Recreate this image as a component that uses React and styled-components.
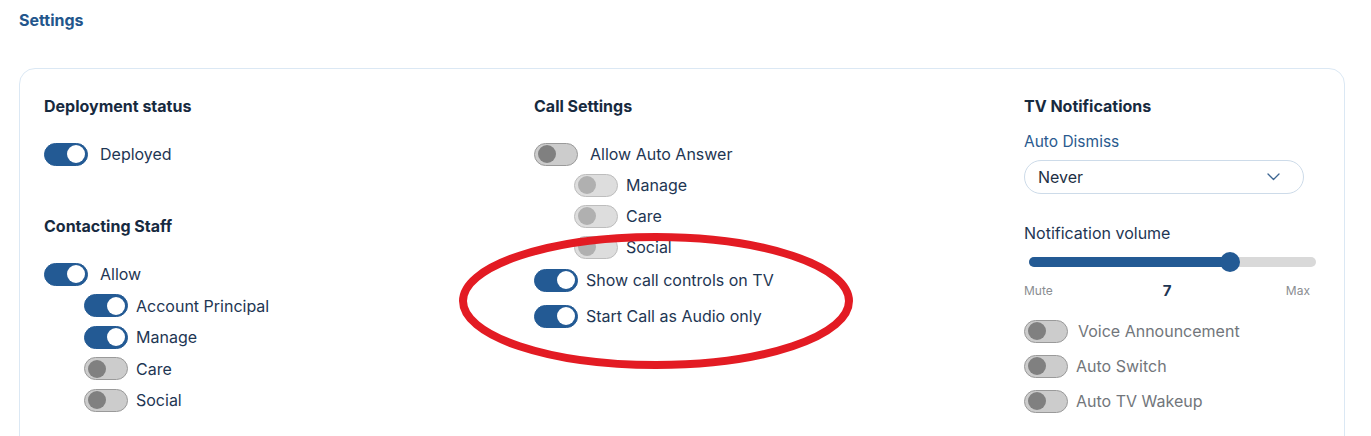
import styled, { createGlobalStyle } from "styled-components";

const GlobalStyle = createGlobalStyle`
  html, body {
    margin: 0;
    padding: 0;
    background: #ffffff;
  }
  body {
    font-family: Inter, "Noto Sans", sans-serif;
    color: #1e3653;
  }
`;

const contactItems = [
  { label: "Account Principal", on: true },
  { label: "Manage", on: true },
  { label: "Care", on: false },
  { label: "Social", on: false },
];

const autoAnswerItems = ["Manage", "Care", "Social"];

const App = () => {
  const volume = 7;

  return (
    <Page>
      <GlobalStyle />
      <PageTitle>Settings</PageTitle>

      <Card>
        <Column>
          <Heading>Deployment status</Heading>
          <ToggleRow $top={26}>
            <Toggle $state="on" />
            <Label $gap={12}>Deployed</Label>
          </ToggleRow>

          <Heading $top={50}>Contacting Staff</Heading>
          <Group $top={26} $gap={7.5}>
            <ToggleRow>
              <Toggle $state="on" />
              <Label $gap={12}>Allow</Label>
            </ToggleRow>
            {contactItems.map((item) => (
              <ToggleRow key={item.label} $indent>
                <Toggle $state={item.on ? "on" : "off"} />
                <Label $gap={8}>{item.label}</Label>
              </ToggleRow>
            ))}
          </Group>
        </Column>

        <Column>
          <Heading>Call Settings</Heading>
          <Group $top={26} $gap={7}>
            <ToggleRow>
              <Toggle $state="off" />
              <Label $gap={12}>Allow Auto Answer</Label>
            </ToggleRow>
            {autoAnswerItems.map((label) => (
              <ToggleRow key={label} $indent>
                <Toggle $state="disabled" />
                <Label $gap={8}>{label}</Label>
              </ToggleRow>
            ))}
          </Group>
          <ToggleRow $top={9}>
            <Toggle $state="on" />
            <Label $gap={8}>Show call controls on TV</Label>
          </ToggleRow>
          <ToggleRow $top={12}>
            <Toggle $state="on" />
            <Label $gap={8}>Start Call as Audio only</Label>
          </ToggleRow>
        </Column>

        <Column>
          <Heading>TV Notifications</Heading>
          <FieldLabel>Auto Dismiss</FieldLabel>
          <Select>
            <span>Never</span>
            <svg width="13" height="8" viewBox="0 0 13 8" fill="none">
              <path
                d="M1 1l5.5 5.5L12 1"
                stroke="#3d6591"
                strokeWidth="1.3"
                strokeLinecap="round"
                strokeLinejoin="round"
              />
            </svg>
          </Select>

          <VolumeLabel>Notification volume</VolumeLabel>
          <Slider>
            <SliderFill style={{ width: `${volume * 10}%` }} />
            <SliderThumb style={{ left: `${volume * 10}%` }} />
          </Slider>
          <SliderScale>
            <span>Mute</span>
            <strong>{volume}</strong>
            <span>Max</span>
          </SliderScale>

          <Group $top={19} $gap={11}>
            <ToggleRow>
              <Toggle $state="off" />
              <Label $gap={10} $muted>
                Voice Announcement
              </Label>
            </ToggleRow>
            <ToggleRow>
              <Toggle $state="off" />
              <Label $gap={8} $muted>
                Auto Switch
              </Label>
            </ToggleRow>
            <ToggleRow>
              <Toggle $state="off" />
              <Label $gap={8} $muted>
                Auto TV Wakeup
              </Label>
            </ToggleRow>
          </Group>
        </Column>
      </Card>

      {/* red annotation ring drawn over the screenshot */}
      <Annotation width="404" height="146" viewBox="0 0 404 146">
        <ellipse
          cx="201"
          cy="72"
          rx="193"
          ry="64"
          fill="none"
          stroke="#e31b23"
          strokeWidth="8"
        />
      </Annotation>
    </Page>
  );
};

export default App;

const Page = styled.div`
  position: relative;
  padding: 10px 26px 0 19px;
  height: 426px;
  overflow: hidden;
`;

const PageTitle = styled.div`
  font-size: 16px;
  font-weight: 700;
  line-height: 20px;
  color: #23568c;
`;

const Card = styled.div`
  margin-top: 38px;
  border: 1px solid #dbe8f4;
  border-radius: 16px;
  padding: 27px 24px 40px 24px;
  display: grid;
  grid-template-columns: 490px 490px 292px;
  min-height: 400px;
`;

const Column = styled.div`
  display: flex;
  flex-direction: column;
  align-items: flex-start;
`;

const Heading = styled.div`
  font-size: 16px;
  font-weight: 700;
  line-height: 20px;
  color: #172a3f;
  margin-top: ${(p) => p.$top || 0}px;
`;

const Group = styled.div`
  display: flex;
  flex-direction: column;
  gap: ${(p) => p.$gap}px;
  margin-top: ${(p) => p.$top || 0}px;
`;

const ToggleRow = styled.div`
  display: flex;
  align-items: center;
  height: 24px;
  margin-top: ${(p) => p.$top || 0}px;
  padding-left: ${(p) => (p.$indent ? 40 : 0)}px;
`;

const toggleColors = {
  on: { track: "#235a94", border: "#235a94", knob: "#ffffff" },
  off: { track: "#cccccc", border: "#9a9a9a", knob: "#808080" },
  disabled: { track: "#dddddd", border: "#bdbdbd", knob: "#b0b0b0" },
};

const Toggle = styled.span`
  position: relative;
  flex: none;
  box-sizing: border-box;
  width: 44px;
  height: 23px;
  border-radius: 12px;
  background: ${(p) => toggleColors[p.$state].track};
  border: 1px solid ${(p) => toggleColors[p.$state].border};

  &::after {
    content: "";
    position: absolute;
    top: 1.5px;
    left: ${(p) => (p.$state === "on" ? "22px" : "3px")};
    width: 18px;
    height: 18px;
    border-radius: 50%;
    background: ${(p) => toggleColors[p.$state].knob};
  }
`;

const Label = styled.span`
  margin-left: ${(p) => p.$gap}px;
  font-size: 16px;
  line-height: 20px;
  color: ${(p) => (p.$muted ? "#72767b" : "#1e3653")};
  white-space: nowrap;
`;

const FieldLabel = styled.div`
  margin-top: 16px;
  font-size: 15.5px;
  line-height: 20px;
  color: #2a5a8e;
`;

const Select = styled.div`
  box-sizing: border-box;
  margin-top: 8px;
  width: 280px;
  height: 34px;
  border: 1px solid #cddbe9;
  border-radius: 17px;
  padding: 0 23px 0 13px;
  display: flex;
  align-items: center;
  justify-content: space-between;
  font-size: 16px;
  color: #1d2f44;
`;

const VolumeLabel = styled.div`
  margin-top: 29px;
  font-size: 16px;
  line-height: 20px;
  color: #1e3653;
`;

const Slider = styled.div`
  position: relative;
  box-sizing: border-box;
  margin: 14px 0 5px 5px;
  width: 287px;
  height: 10px;
  border-radius: 5px;
  background: #d9d9d9;
`;

const SliderFill = styled.div`
  height: 100%;
  border-radius: 5px;
  background: #235a94;
`;

const SliderThumb = styled.div`
  position: absolute;
  top: 50%;
  width: 20px;
  height: 20px;
  border-radius: 50%;
  background: #235a94;
  transform: translate(-50%, -50%);
`;

const SliderScale = styled.div`
  box-sizing: border-box;
  margin-top: 8px;
  width: 292px;
  padding-right: 6px;
  display: grid;
  grid-template-columns: 1fr auto 1fr;
  align-items: center;
  height: 20px;
  font-size: 12px;
  color: #8a8d91;

  strong {
    font-size: 15px;
    font-weight: 700;
    color: #1e3653;
  }
  span:last-child {
    text-align: right;
  }
`;

const Annotation = styled.svg`
  position: absolute;
  left: 455px;
  top: 229px;
  pointer-events: none;
`;
